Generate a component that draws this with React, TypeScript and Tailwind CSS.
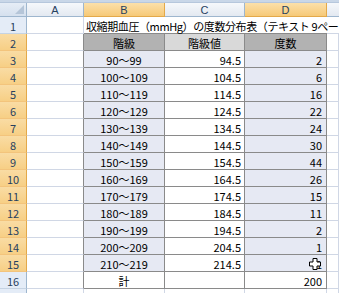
import React from "react";

const data: [string, string, string][] = [
  ["90～99", "94.5", "2"],
  ["100～109", "104.5", "6"],
  ["110～119", "114.5", "16"],
  ["120～129", "124.5", "22"],
  ["130～139", "134.5", "24"],
  ["140～149", "144.5", "30"],
  ["150～159", "154.5", "44"],
  ["160～169", "164.5", "26"],
  ["170～179", "174.5", "15"],
  ["180～189", "184.5", "11"],
  ["190～199", "194.5", "2"],
  ["200～209", "204.5", "1"],
  ["210～219", "214.5", "1"],
];

const rowHead =
  "h-[17px] flex items-center justify-center pt-[3px] border-r border-b border-r-[#9eb6ce] border-b-[#c5d3e3] bg-[#e4ecf7] text-[#27415f]";
const rowHeadSel =
  "h-[17px] flex items-center justify-center pt-[3px] border-r border-b border-r-[#e3a94a] border-b-[#f3c47c] bg-gradient-to-b from-[#f9dca4] to-[#f7cf85] text-[#27415f]";
const grid = "h-[17px] border-r border-b border-[#d0d7e5]";
const aTable = "h-[17px] border-r border-b border-r-[#8a8a8a] border-b-[#d0d7e5]";
const cellBase = "h-[17px] border-r border-b border-[#8a8a8a] flex items-center pt-[2px]";

function Cursor() {
  return (
    <svg
      className="absolute right-[5px] top-[3px]"
      width="12"
      height="12"
      viewBox="0 0 12 12"
    >
      <path
        d="M4 0.5 H8 V4 H11.5 V8 H8 V11.5 H4 V8 H0.5 V4 H4 Z"
        fill="#ffffff"
        stroke="#000000"
        strokeWidth="1"
      />
    </svg>
  );
}

export default function App() {
  return (
    <div className="w-[339px] h-[293px] overflow-hidden bg-white font-['Noto_Sans_CJK_JP',sans-serif] text-[11px] leading-none text-black">
      <div className="h-[3px] bg-[#c9d7e8] border-b border-[#b6c7dc]" />
      <div className="grid grid-cols-[27px_57px_81px_80px_82px_12px]">
        {/* header row */}
        <div className="h-[14px] relative bg-gradient-to-b from-[#e6edf6] to-[#d5e0ee] border-r border-b border-[#9eb6ce]">
          <div className="absolute right-[2px] bottom-[2px] w-0 h-0 border-l-[9px] border-l-transparent border-b-[9px] border-b-[#b5c5d8]" />
        </div>
        <div className="h-[14px] flex items-center justify-center pt-[2px] bg-gradient-to-b from-[#f6f8fb] to-[#e3e9f1] border-r border-b border-[#9eb6ce] text-[#27415f] font-['Liberation_Sans',sans-serif] text-[11px]">
          A
        </div>
        <div className="h-[14px] flex items-center justify-center pt-[2px] bg-gradient-to-b from-[#fbe0aa] to-[#f6c977] border-r border-b border-r-[#e3a94a] border-b-[#e3a94a] text-[#27415f] font-['Liberation_Sans',sans-serif] text-[11px]">
          B
        </div>
        <div className="h-[14px] flex items-center justify-center pt-[2px] bg-gradient-to-b from-[#f6f8fb] to-[#e3e9f1] border-r border-b border-[#9eb6ce] text-[#27415f] font-['Liberation_Sans',sans-serif] text-[11px]">
          C
        </div>
        <div className="h-[14px] flex items-center justify-center pt-[2px] bg-gradient-to-b from-[#fbe0aa] to-[#f6c977] border-r border-b border-r-[#e3a94a] border-b-[#e3a94a] text-[#27415f] font-['Liberation_Sans',sans-serif] text-[11px]">
          D
        </div>
        <div className="h-[14px] bg-gradient-to-b from-[#f6f8fb] to-[#e3e9f1] border-b border-[#9eb6ce]" />

        {/* row 1 */}
        <div className={rowHead}>1</div>
        <div className="h-[17px] border-r border-b border-r-[#d0d7e5] border-b-[#d0d7e5]" />
        <div className="h-[17px] relative z-10 border-b border-[#8a8a8a] flex items-center pt-[2px] pl-[2px] whitespace-nowrap overflow-visible tracking-[-0.4px]">
          収縮期血圧（mmHg）の度数分布表（テキスト 9ページ）
        </div>
        <div className="h-[17px] border-b border-[#8a8a8a]" />
        <div className="h-[17px] border-b border-[#8a8a8a]" />
        <div className="h-[17px] border-b border-[#d0d7e5]" />

        {/* row 2 */}
        <div className={rowHeadSel}>2</div>
        <div className={aTable} />
        <div className={cellBase + " justify-center bg-[#b2b2b2]"}>階級</div>
        <div className={cellBase + " justify-center bg-[#d9d9d9]"}>階級値</div>
        <div className={cellBase + " justify-center bg-[#b2b2b2]"}>度数</div>
        <div className={grid} />

        {data.map((r, i) => (
          <React.Fragment key={i}>
            <div className={rowHeadSel}>{i + 3}</div>
            <div className={aTable} />
            <div className={cellBase + " justify-center bg-[#e6e9f3]"}>{r[0]}</div>
            <div className={cellBase + " justify-end pr-[3px]"}>{r[1]}</div>
            <div className={cellBase + " justify-end pr-[4px] bg-[#e6e9f3] relative"}>
              {r[2]}
              {i === 12 && <Cursor />}
            </div>
            <div className={grid} />
          </React.Fragment>
        ))}

        {/* row 16 */}
        <div className={rowHead}>16</div>
        <div className={aTable} />
        <div className={cellBase + " justify-center"}>計</div>
        <div className={cellBase} />
        <div className={cellBase + " justify-end pr-[4px]"}>200</div>
        <div className={grid} />

        {/* row 17 */}
        <div className={rowHead}>17</div>
        <div className={grid} />
        <div className={grid} />
        <div className={grid} />
        <div className={grid} />
        <div className={grid} />
      </div>
    </div>
  );
}
